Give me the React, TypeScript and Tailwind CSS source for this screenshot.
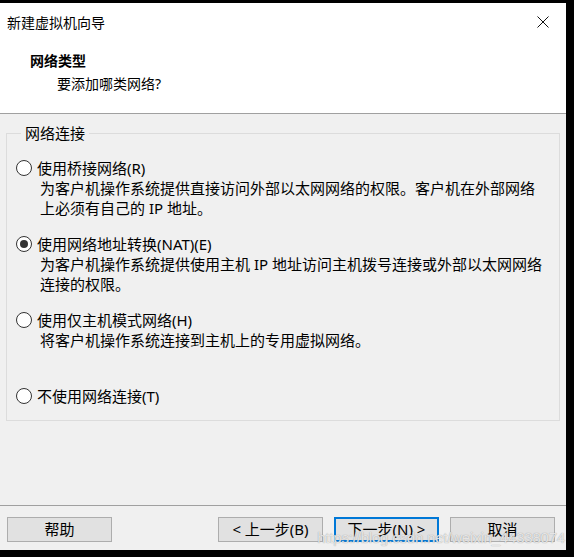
import React from 'react';

const font = '[font-family:"Noto_Sans","Noto_Sans_CJK_SC",sans-serif]';

const Radio = ({ checked }: { checked?: boolean }) => (
  <span className="flex h-[16px] w-[16px] shrink-0 items-center justify-center rounded-full border border-[#333] bg-white">
    {checked && <span className="h-[8px] w-[8px] rounded-full bg-[#333]" />}
  </span>
);

const Option = ({
  checked,
  label,
  lines,
  className,
}: {
  checked?: boolean;
  label: React.ReactNode;
  lines?: string[];
  className?: string;
}) => (
  <div className={className}>
    <div className="flex h-[20px] items-center gap-[5px]">
      <Radio checked={checked} />
      <span className="leading-[20px]">{label}</span>
    </div>
    {lines?.map((l, i) => (
      <div key={i} className="pl-[24px] leading-[20px]">
        {l}
      </div>
    ))}
  </div>
);

const Btn = ({ children, primary }: { children: React.ReactNode; primary?: boolean }) => (
  <button
    className={
      'flex h-[25px] w-[105px] items-center justify-center bg-[#e1e1e1] text-[15px] leading-none text-black ' +
      (primary ? 'border-2 border-[#0078d7]' : 'border border-[#adadad]')
    }
  >
    {children}
  </button>
);

export default function App() {
  return (
    <div className={`relative h-[557px] w-[574px] overflow-hidden bg-black pt-[3px] text-black ${font}`}>
      <div className="flex h-[547px] w-[566px] flex-col bg-[#f0f0f0]">
        {/* title bar */}
        <div className="flex h-[38px] shrink-0 items-center justify-between bg-white pl-[7px] pr-[17px]">
          <span className="text-[14px]">新建虚拟机向导</span>
          <svg width="12" height="12" viewBox="0 0 12 12">
            <path d="M0.5 0.5 L11.5 11.5 M11.5 0.5 L0.5 11.5" stroke="#111" strokeWidth="1" />
          </svg>
        </div>

        {/* header */}
        <div className="h-[73px] shrink-0 border-b border-[#a0a0a0] bg-white pl-[30px] pt-[8px]">
          <div className="text-[14px] font-bold leading-[23px]">网络类型</div>
          <div className="pl-[27px] text-[14px] leading-[23px]">要添加哪类网络?</div>
        </div>

        {/* body */}
        <div className="flex-1 text-[15px]">
          <fieldset className="mx-[6px] mt-[9px] border border-[#dcdcdc] pb-[14px] pl-[9px] pr-0">
            <legend className="ml-[5px] px-[4px] leading-[20px]">网络连接</legend>
            <Option
              className="mt-[15px]"
              label="使用桥接网络(R)"
              lines={[
                '为客户机操作系统提供直接访问外部以太网网络的权限。客户机在外部网络',
                '上必须有自己的 IP 地址。',
              ]}
            />
            <Option
              className="mt-[16px]"
              checked
              label="使用网络地址转换(NAT)(E)"
              lines={['为客户机操作系统提供使用主机 IP 地址访问主机拨号连接或外部以太网网络', '连接的权限。']}
            />
            <Option
              className="mt-[16px]"
              label="使用仅主机模式网络(H)"
              lines={['将客户机操作系统连接到主机上的专用虚拟网络。']}
            />
            <Option className="mt-[36px]" label="不使用网络连接(T)" />
          </fieldset>
        </div>

        {/* footer */}
        <div className="flex h-[45px] shrink-0 items-start border-t border-[#a0a0a0] pl-[7px] pr-[11px] pt-[11px]">
          <Btn>帮助</Btn>
          <div className="ml-auto flex gap-[11px]">
            <Btn>&lt; 上一步(B)</Btn>
            <Btn primary>下一步(N) &gt;</Btn>
            <Btn>取消</Btn>
          </div>
        </div>
      </div>

      {/* watermark */}
      <div className="pointer-events-none absolute right-[9px] top-[527px] whitespace-nowrap text-[15px] tracking-[-0.2px] text-white/75 [font-family:'Liberation_Sans',sans-serif] [text-shadow:0_0_1px_#888]">
        https://blog.csdn.net/weixin_44338074
      </div>
    </div>
  );
}
